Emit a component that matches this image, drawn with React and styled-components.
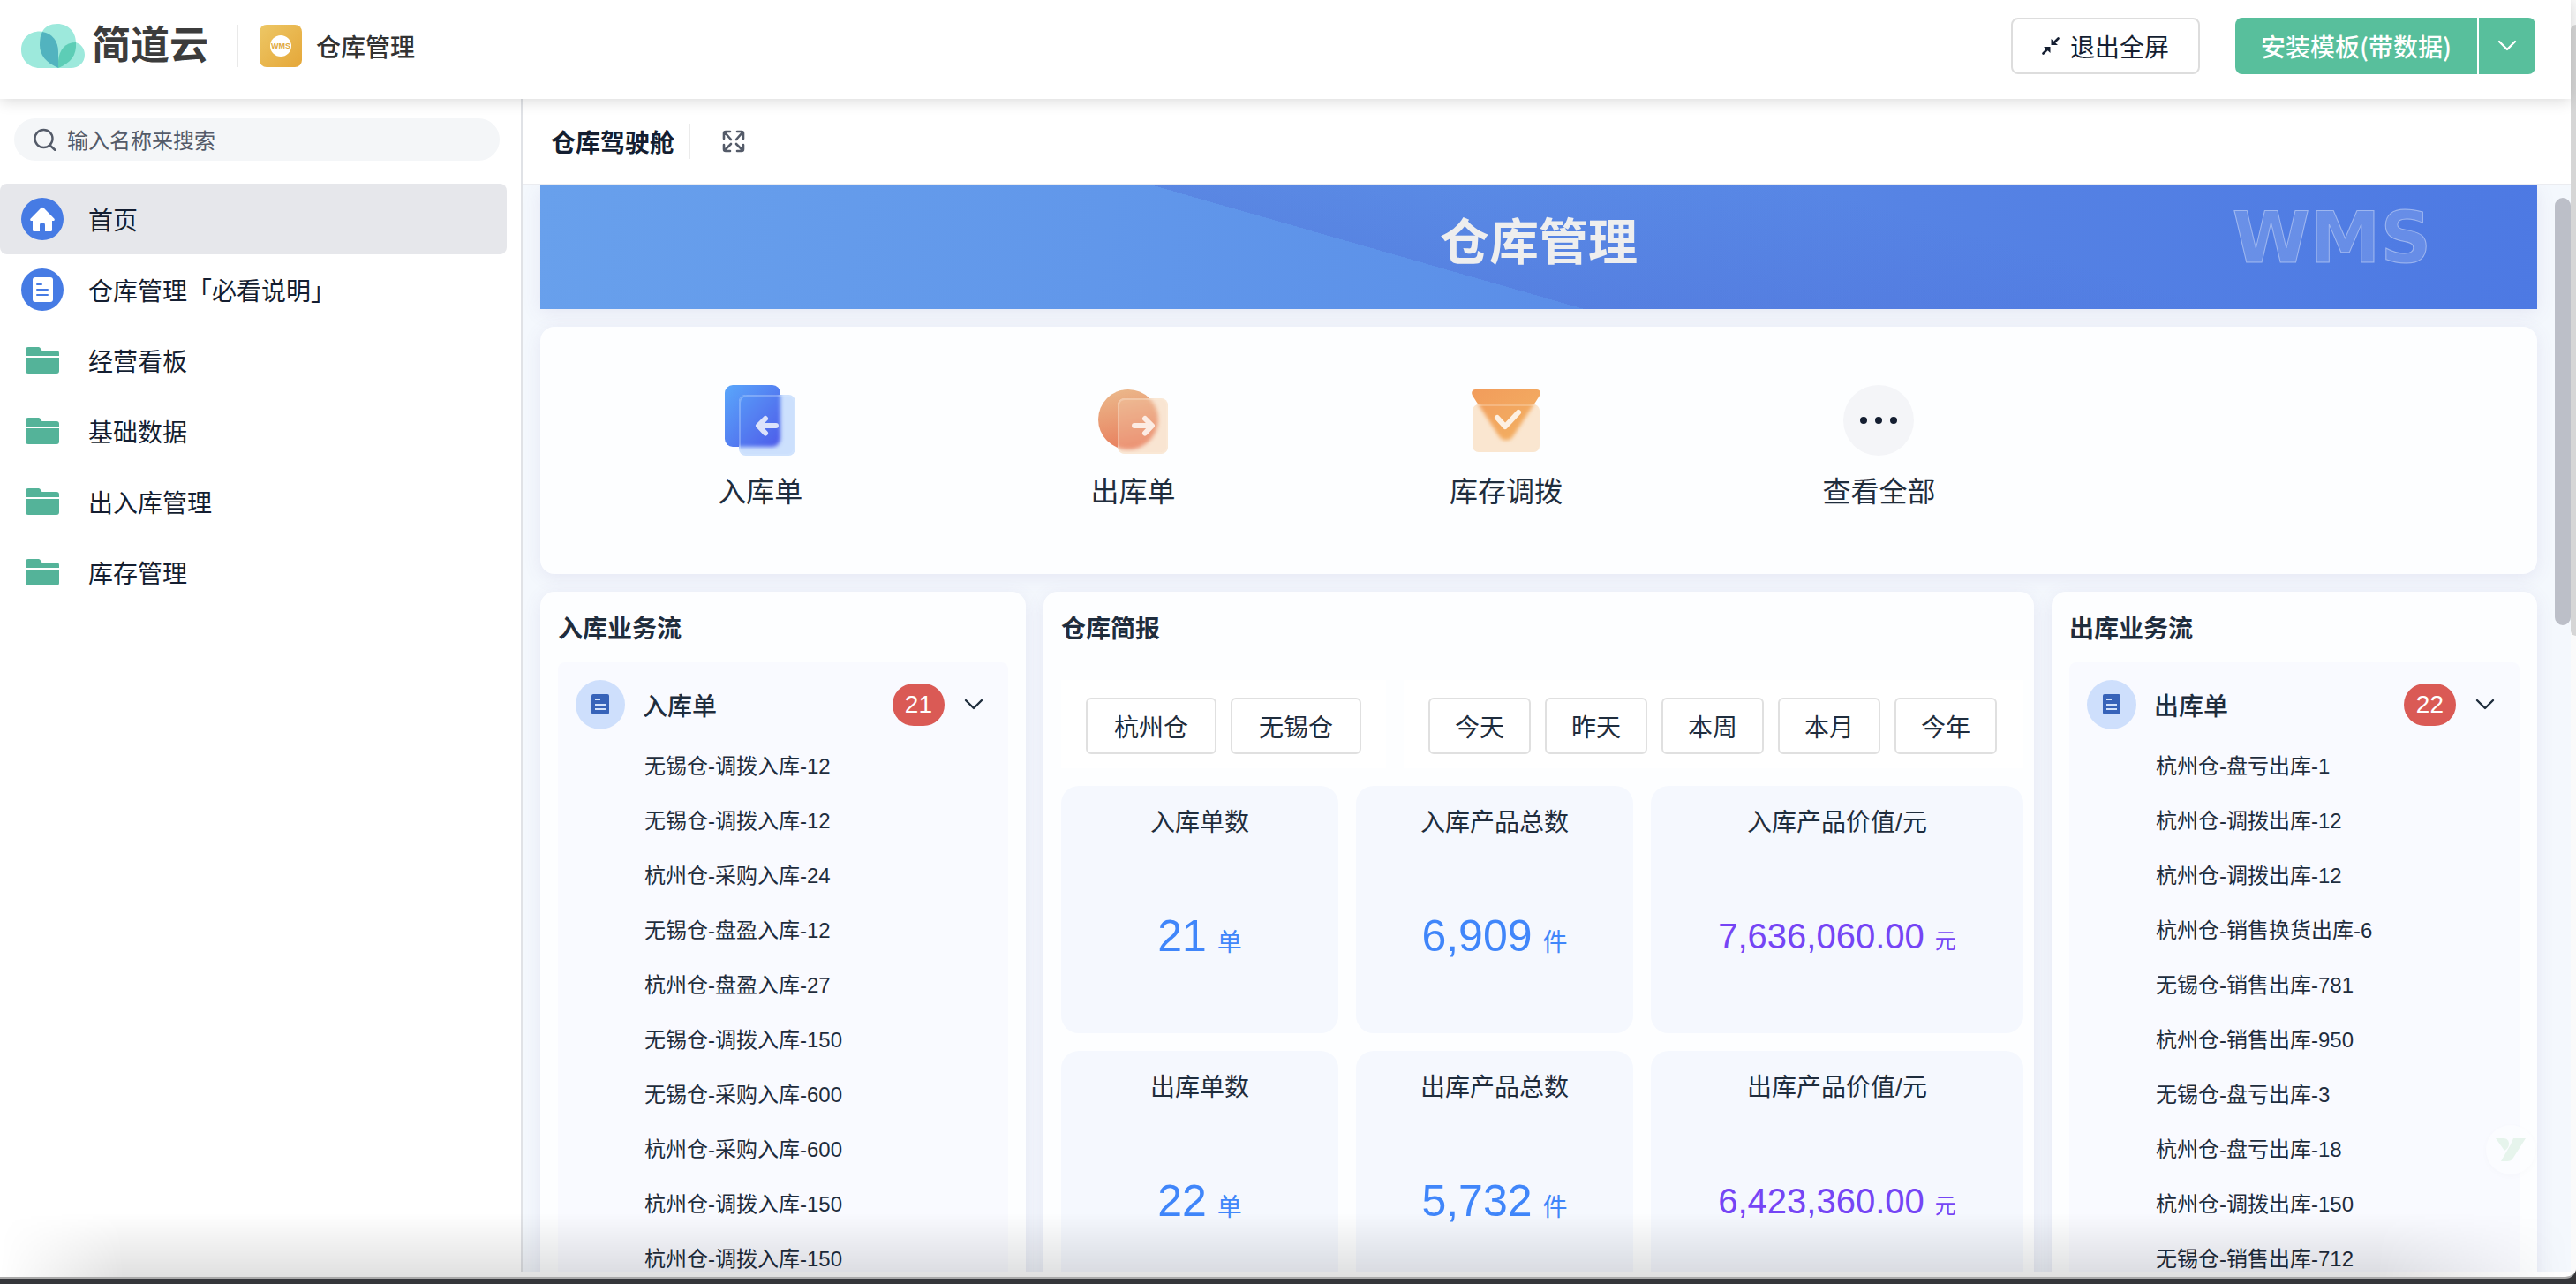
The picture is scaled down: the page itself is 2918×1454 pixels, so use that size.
import { useState } from "react";
import styled, { createGlobalStyle } from "styled-components";

const menu = [
  { name: "首页", icon: "home" },
  { name: "仓库管理「必看说明」", icon: "doc" },
  { name: "经营看板", icon: "folder" },
  { name: "基础数据", icon: "folder" },
  { name: "出入库管理", icon: "folder" },
  { name: "库存管理", icon: "folder" },
];

const inbound = [
  "无锡仓-调拨入库-12",
  "无锡仓-调拨入库-12",
  "杭州仓-采购入库-24",
  "无锡仓-盘盈入库-12",
  "杭州仓-盘盈入库-27",
  "无锡仓-调拨入库-150",
  "无锡仓-采购入库-600",
  "杭州仓-采购入库-600",
  "杭州仓-调拨入库-150",
  "杭州仓-调拨入库-150",
];

const outbound = [
  "杭州仓-盘亏出库-1",
  "杭州仓-调拨出库-12",
  "杭州仓-调拨出库-12",
  "杭州仓-销售换货出库-6",
  "无锡仓-销售出库-781",
  "杭州仓-销售出库-950",
  "无锡仓-盘亏出库-3",
  "杭州仓-盘亏出库-18",
  "杭州仓-调拨出库-150",
  "无锡仓-销售出库-712",
];

const stats = [
  { label: "入库单数", value: "21", unit: "单" },
  { label: "入库产品总数", value: "6,909", unit: "件" },
  { label: "入库产品价值/元", value: "7,636,060.00", unit: "元", money: true },
  { label: "出库单数", value: "22", unit: "单" },
  { label: "出库产品总数", value: "5,732", unit: "件" },
  { label: "出库产品价值/元", value: "6,423,360.00", unit: "元", money: true },
];

const warehouses = ["杭州仓", "无锡仓"];
const periods = ["今天", "昨天", "本周", "本月", "今年"];

const CloudLogo = () => (
  <svg width="72" height="50" viewBox="0 0 72 50" aria-hidden="true">
    <path
      d="M21 50C9 50 0 41 0 29.500C0 17 9 8.500 21 8.500L24 8.700C27 3 33 0 41 0C53 0 62 9 62 21C68 23 72 28 72 35C72 44 65 50 56 50Z"
      fill="#9de9dc"
    />
    <path
      d="M42 50C28 44 21 35 21 24C21 17 22 12 24 9C35 11 42 19 42 32Z"
      fill="#52b3bf"
    />
    <path
      d="M42 50V42C43 29 50 21 62 21C63 36 56 44 42 50Z"
      fill="#5dcdb6"
    />
  </svg>
);

const HomeIcon = () => (
  <svg width="48" height="48" viewBox="0 0 48 48" aria-hidden="true">
    <circle cx="24" cy="24" r="24" fill="#467be4" />
    <path
      d="M22.700 11.300a2 2 0 0 1 2.600 0L37.300 23.500c1 1 .4 2.500-.8 2.500H35v10.500a1.500 1.500 0 0 1-1.500 1.500H27v-7a3 3 0 0 0-6 0v7h-6.500a1.500 1.500 0 0 1-1.500-1.500V26h-1.500c-1.200 0-1.800-1.500-.8-2.500Z"
      fill="#fff"
    />
  </svg>
);

const DocIcon = () => (
  <svg width="48" height="48" viewBox="0 0 48 48" aria-hidden="true">
    <circle cx="24" cy="24" r="24" fill="#467be4" />
    <rect x="13" y="10" width="23" height="28" rx="3" fill="#fff" />
    <path
      d="M18 18h5M18 24h12M18 30h12"
      stroke="#467be4"
      strokeWidth="2"
      strokeLinecap="round"
    />
  </svg>
);

const FolderIcon = () => (
  <svg width="48" height="48" viewBox="0 0 48 48" aria-hidden="true">
    <path
      d="M5 19V12a3 3 0 0 1 3-3h11c1 0 2 .4 2.500 1l2 3H40a3 3 0 0 1 3 3v3Z"
      fill="#54b399"
    />
    <path d="M5 21h38v15a3 3 0 0 1-3 3H8a3 3 0 0 1-3-3Z" fill="#54b399" />
  </svg>
);

const menuIcons = { home: HomeIcon, doc: DocIcon, folder: FolderIcon };

const SearchIcon = () => (
  <svg width="26" height="26" viewBox="0 0 26 26" fill="none" aria-hidden="true">
    <circle cx="11.500" cy="12" r="10" stroke="#545b69" strokeWidth="2.400" />
    <path d="M18.500 19.500l6 5.500" stroke="#545b69" strokeWidth="2.600" strokeLinecap="round" />
  </svg>
);

const Chevron = ({ color }) => (
  <svg width="22" height="14" viewBox="0 0 22 14" fill="none" aria-hidden="true">
    <path
      d="M2 2l9 9 9-9"
      stroke={color}
      strokeWidth="2.400"
      strokeLinecap="round"
      strokeLinejoin="round"
    />
  </svg>
);

const ShrinkIcon = () => (
  <svg width="20" height="20" viewBox="0 0 20 20" fill="#141e31" aria-hidden="true">
    <path d="M10.500 2v7h7.500Z" />
    <path d="M9.500 18v-7H2Z" />
    <path
      d="M12.500 7.500l6-6M7.500 12.500l-6 6"
      stroke="#141e31"
      strokeWidth="2.600"
      strokeLinecap="round"
    />
  </svg>
);

const ExpandIcon = () => (
  <svg
    width="26"
    height="26"
    viewBox="0 0 26 26"
    fill="none"
    stroke="#545b69"
    strokeWidth="2.600"
    strokeLinecap="round"
    aria-hidden="true"
  >
    <path d="M2 10V4a2 2 0 0 1 2-2h5M3 3l7 8M24 10V4a2 2 0 0 0-2-2h-5M23 3l-7 8" />
    <path d="M2 17v5a2 2 0 0 0 2 2h5M3 23l7-7M24 17v5a2 2 0 0 1-2 2h-5M23 23l-7-7" />
  </svg>
);

const InboundIcon = () => (
  <svg width="80" height="80" viewBox="0 0 80 80" aria-hidden="true">
    <defs>
      <linearGradient id="inBack" x1="0" y1="0" x2="1" y2="1">
        <stop offset="0" stopColor="#5aa7fb" />
        <stop offset="1" stopColor="#4e5be9" />
      </linearGradient>
      <clipPath id="inClip">
        <rect x="16" y="11" width="64" height="69" rx="8" />
      </clipPath>
      <filter id="soft">
        <feGaussianBlur stdDeviation="2" />
      </filter>
    </defs>
    <rect width="63" height="70" rx="9" fill="url(#inBack)" />
    <rect x="16" y="11" width="64" height="69" rx="8" fill="#cce0fd" />
    <g clipPath="url(#inClip)">
      <rect width="63" height="70" rx="9" fill="url(#inBack)" filter="url(#soft)" />
    </g>
    <rect
      x="17"
      y="12"
      width="62"
      height="67"
      rx="8"
      fill="none"
      stroke="#d9eaff"
      strokeOpacity="0.300"
      strokeWidth="2"
    />
    <path
      d="M58 46H39M46 38l-8 8 8 8.500"
      fill="none"
      stroke="#dce2fb"
      strokeWidth="6"
      strokeLinecap="round"
      strokeLinejoin="round"
    />
  </svg>
);

const OutboundIcon = () => (
  <svg width="80" height="80" viewBox="0 0 80 80" aria-hidden="true">
    <defs>
      <linearGradient id="outBack" x1="0.300" y1="0" x2="0.500" y2="1">
        <stop offset="0" stopColor="#ebb78a" />
        <stop offset="1" stopColor="#e87e5d" />
      </linearGradient>
      <clipPath id="outClip">
        <rect x="22" y="15" width="57" height="63" rx="8" />
      </clipPath>
      <filter id="softOut">
        <feGaussianBlur stdDeviation="2" />
      </filter>
    </defs>
    <circle cx="34" cy="39" r="34" fill="url(#outBack)" />
    <rect x="22" y="15" width="57" height="63" rx="8" fill="#f9e5d2" />
    <g clipPath="url(#outClip)">
      <circle cx="34" cy="39" r="34" fill="url(#outBack)" filter="url(#softOut)" opacity="0.800" />
    </g>
    <rect
      x="23"
      y="16"
      width="55"
      height="61"
      rx="7"
      fill="none"
      stroke="#fdeedd"
      strokeOpacity="0.300"
      strokeWidth="2"
    />
    <path
      d="M41 46h19M53 38l8 8-8 8.500"
      fill="none"
      stroke="#fcece4"
      strokeWidth="6"
      strokeLinecap="round"
      strokeLinejoin="round"
    />
  </svg>
);

const TransferIcon = () => (
  <svg width="80" height="80" viewBox="0 0 80 80" aria-hidden="true">
    <defs>
      <linearGradient id="trBack" x1="0" y1="0" x2="1" y2="1">
        <stop offset="0" stopColor="#f29c5b" />
        <stop offset="1" stopColor="#f3b264" />
      </linearGradient>
      <clipPath id="trClip">
        <rect x="2" y="22" width="76" height="54" rx="7" />
      </clipPath>
      <filter id="softTr">
        <feGaussianBlur stdDeviation="2" />
      </filter>
    </defs>
    <path
      d="M5 5h70c3 0 5 3 3 7L48 59c-4 6-12 6-16 0L2 12c-2-4 0-7 3-7Z"
      fill="url(#trBack)"
    />
    <rect x="2" y="22" width="76" height="54" rx="7" fill="#fae6d0" />
    <g clipPath="url(#trClip)">
      <path
        d="M5 5h70c3 0 5 3 3 7L48 58c-4 6-12 6-16 0L2 12c-2-4 0-7 3-7Z"
        fill="url(#trBack)"
        filter="url(#softTr)"
      />
    </g>
    <rect
      x="3"
      y="23"
      width="74"
      height="52"
      rx="7"
      fill="none"
      stroke="#fde9d0"
      strokeOpacity="0.300"
      strokeWidth="2"
    />
    <path
      d="M30 37l9 10 15-16"
      fill="none"
      stroke="#fdf0e2"
      strokeWidth="6"
      strokeLinecap="round"
      strokeLinejoin="round"
    />
  </svg>
);

const MoreIcon = () => (
  <svg width="80" height="80" viewBox="0 0 80 80" aria-hidden="true">
    <circle cx="40" cy="40" r="40" fill="#f4f5f8" />
    <circle cx="23" cy="40" r="4" fill="#141e31" />
    <circle cx="40" cy="40" r="4" fill="#141e31" />
    <circle cx="57" cy="40" r="4" fill="#141e31" />
  </svg>
);

const FlowIcon = () => (
  <svg width="56" height="56" viewBox="0 0 56 56" aria-hidden="true">
    <circle cx="28" cy="28" r="28" fill="#cedffc" />
    <rect x="18" y="16" width="20" height="23" rx="2" fill="#3763b9" />
    <path d="M22 22h6M22 28h12M22 33h12" stroke="#d3e2fb" strokeWidth="2" />
  </svg>
);

const shortcuts = [
  { name: "入库单", Icon: InboundIcon },
  { name: "出库单", Icon: OutboundIcon },
  { name: "库存调拨", Icon: TransferIcon },
  { name: "查看全部", Icon: MoreIcon },
];

const Flow = ({ title, name, count, rows }) => {
  const [open, setOpen] = useState(true);

  return (
    <Card>
      <CardTitle>{title}</CardTitle>
      <FlowPanel>
        <FlowHead type="button" aria-expanded={open} onClick={() => setOpen(!open)}>
          <FlowIcon />
          <FlowName>{name}</FlowName>
          <Badge>{count}</Badge>
          <Chevron color="#1f2d3d" />
        </FlowHead>
        {open && (
          <FlowList>
            {rows.map((row, i) => (
              <FlowRow key={i}>{row}</FlowRow>
            ))}
          </FlowList>
        )}
      </FlowPanel>
    </Card>
  );
};

const App = () => {
  const [keyword, setKeyword] = useState("");

  return (
    <Shell>
      <GlobalStyle />
      <Window>
        <Header>
          <Brand href="#">
            <CloudLogo />
            <BrandName>简道云</BrandName>
          </Brand>
          <HeaderDivider />
          <AppBadge>
            <span>WMS</span>
          </AppBadge>
          <AppName>仓库管理</AppName>
          <ExitButton type="button">
            <ShrinkIcon />
            退出全屏
          </ExitButton>
          <InstallGroup>
            <InstallButton type="button">安装模板(带数据)</InstallButton>
            <InstallMore type="button" aria-label="更多安装方式">
              <Chevron color="#fff" />
            </InstallMore>
          </InstallGroup>
        </Header>

        <Body>
          <Sidebar>
            <SearchBox>
              <SearchIcon />
              <SearchInput
                type="text"
                aria-label="搜索"
                placeholder="输入名称来搜索"
                value={keyword}
                onChange={(e) => setKeyword(e.target.value)}
              />
            </SearchBox>
            <nav>
              {menu.map(({ name, icon }, i) => {
                const Icon = menuIcons[icon];
                return (
                  <MenuItem key={name} href="#" $active={i === 0}>
                    <Icon />
                    {name}
                  </MenuItem>
                );
              })}
            </nav>
          </Sidebar>

          <Main>
            <Toolbar>
              <PageTitle>仓库驾驶舱</PageTitle>
              <IconButton type="button" aria-label="全屏">
                <ExpandIcon />
              </IconButton>
            </Toolbar>
            <Scroller>
              <Board>
                <Banner>
                  <BannerTitle>仓库管理</BannerTitle>
                  <BannerMark>WMS</BannerMark>
                </Banner>
                <Shortcuts>
                  {shortcuts.map(({ name, Icon }) => (
                    <Shortcut key={name} href="#">
                      <Icon />
                      {name}
                    </Shortcut>
                  ))}
                </Shortcuts>
                <Columns>
                  <Flow title="入库业务流" name="入库单" count={21} rows={inbound} />
                  <Card $brief>
                    <CardTitle>仓库简报</CardTitle>
                    <Filters>
                      <FilterGroup>
                        {warehouses.map((w) => (
                          <FilterButton key={w} type="button" $wide>
                            {w}
                          </FilterButton>
                        ))}
                      </FilterGroup>
                      <FilterGroup $grow>
                        {periods.map((p) => (
                          <FilterButton key={p} type="button">
                            {p}
                          </FilterButton>
                        ))}
                      </FilterGroup>
                    </Filters>
                    <Stats>
                      {stats.map(({ label, value, unit, money }) => (
                        <Stat key={label}>
                          <StatLabel>{label}</StatLabel>
                          <StatValue $money={money}>
                            {value}
                            <StatUnit $money={money}>{unit}</StatUnit>
                          </StatValue>
                        </Stat>
                      ))}
                    </Stats>
                  </Card>
                  <Flow title="出库业务流" name="出库单" count={22} rows={outbound} />
                </Columns>
              </Board>
              <ScrollTrack>
                <ScrollThumb />
              </ScrollTrack>
            </Scroller>
          </Main>
        </Body>
        <BottomShade />
        <Helper type="button" aria-label="助手">
          <svg width="34" height="26" viewBox="0 0 34 26" aria-hidden="true">
            <path d="M0 0h9c4 0 6 3 6 6 0 4-2 6-5 8Z" fill="#e6f4ec" />
            <path d="M20 0h14L20 22c-2 3-4 4-7 4H6L17 7Z" fill="#e6f4ec" />
          </svg>
        </Helper>
      </Window>
      <PageTrack>
        <PageThumb />
      </PageTrack>
    </Shell>
  );
};

const latin = `"Liberation Sans", "Noto Sans CJK SC", sans-serif`;
const shadow = "0 4px 20px rgba(94, 80, 160, 0.1)";

const GlobalStyle = createGlobalStyle`
  * {
    box-sizing: border-box;
  }

  body {
    margin: 0;
    background: #35363a;
    color: #141e31;
    font-family: "Noto Sans CJK SC", sans-serif;
    font-size: 28px;
    line-height: 40px;
  }

  button, input {
    font: inherit;
    color: inherit;
  }

  button {
    padding: 0;
    border: 0;
    background: none;
    cursor: pointer;
  }

  a {
    color: inherit;
    text-decoration: none;
  }

  svg {
    display: block;
    flex: none;
  }
`;

const Shell = styled.div`
  display: flex;
  height: calc(100vh - 6px);
  background: #fff;
  border-bottom: 2px solid #a9a9a9;
  border-radius: 0 0 12px 0;
  overflow: hidden;
`;

const Window = styled.div`
  position: relative;
  flex: 1;
  min-width: 0;
  display: flex;
  flex-direction: column;
  padding-bottom: 6px;
`;

const Header = styled.header`
  position: relative;
  z-index: 1;
  flex: none;
  display: flex;
  align-items: center;
  height: 112px;
  padding: 0 40px 8px 24px;
  background: #fff;
  box-shadow: 0 2px 16px rgba(0, 0, 0, 0.16);
`;

const Brand = styled.a`
  display: flex;
  align-items: center;
  gap: 8px;
`;

const BrandName = styled.span`
  color: #3c3c3c;
  font-family: ${latin};
  font-size: 44px;
  font-weight: 700;
  line-height: 48px;
`;

const HeaderDivider = styled.span`
  width: 2px;
  height: 48px;
  margin: 0 24px 0 32px;
  background: #e9e9e9;
`;

const AppBadge = styled.span`
  display: grid;
  place-items: center;
  width: 48px;
  height: 48px;
  border-radius: 8px;
  background: linear-gradient(135deg, #edc765, #e5a739);

  span {
    display: grid;
    place-items: center;
    width: 24px;
    height: 24px;
    border-radius: 12px;
    background: #fff;
    color: #e0a93c;
    font-family: ${latin};
    font-size: 9px;
    font-weight: 700;
    line-height: 12px;
  }
`;

const AppName = styled.span`
  flex: 1;
  margin-left: 16px;
  color: #333;
  font-weight: 500;
`;

const ExitButton = styled.button`
  display: flex;
  align-items: center;
  justify-content: center;
  gap: 12px;
  width: 214px;
  height: 64px;
  border: 2px solid #ddd;
  border-radius: 8px;
  background: #fff;
`;

const InstallGroup = styled.div`
  display: flex;
  gap: 2px;
  margin-left: 40px;
  color: #fff;
  font-weight: 500;
`;

const InstallButton = styled.button`
  width: 274px;
  height: 64px;
  border-radius: 8px 0 0 8px;
  background: #58bf9c;
`;

const InstallMore = styled.button`
  display: grid;
  place-items: center;
  width: 64px;
  height: 64px;
  border-radius: 0 8px 8px 0;
  background: #58bf9c;
`;

const Body = styled.div`
  flex: 1;
  min-height: 0;
  display: flex;
`;

const Sidebar = styled.aside`
  flex: none;
  width: 592px;
  padding: 22px 16px 0 0;
  border-right: 2px solid #e0e2e6;
  background: #fff;
`;

const SearchBox = styled.label`
  display: flex;
  align-items: center;
  gap: 12px;
  height: 48px;
  margin: 0 8px 26px 16px;
  padding: 0 22px;
  border-radius: 24px;
  background: #f4f6f8;
`;

const SearchInput = styled.input`
  flex: 1;
  min-width: 0;
  padding: 0;
  border: 0;
  outline: 0;
  background: none;
  font-size: 24px;
  line-height: 32px;

  &::placeholder {
    color: #545b69;
    opacity: 1;
  }
`;

const MenuItem = styled.a`
  display: flex;
  align-items: center;
  gap: 28px;
  height: 80px;
  padding-left: 24px;
  border-radius: 8px;
  background: ${({ $active }) => ($active ? "#e6e7eb" : "none")};
`;

const Main = styled.main`
  flex: 1;
  min-width: 0;
  display: flex;
  flex-direction: column;
`;

const Toolbar = styled.div`
  flex: none;
  display: flex;
  align-items: center;
  height: 98px;
  padding-left: 32px;
  border-bottom: 2px solid #ebecf0;
  background: #fff;
`;

const PageTitle = styled.h1`
  margin: 0;
  padding-right: 16px;
  border-right: 2px solid #ebebeb;
  font-size: 28px;
  font-weight: 700;
  line-height: 40px;
`;

const IconButton = styled.button`
  margin-left: 36px;
`;

const Scroller = styled.div`
  flex: 1;
  min-height: 0;
  display: flex;
  background: #f4f8fd;
`;

const Board = styled.div`
  flex: 1;
  min-width: 0;
  display: flex;
  flex-direction: column;
  gap: 20px;
  padding: 0 20px;
  overflow: hidden;
`;

const ScrollTrack = styled.div`
  width: 18px;
  padding-top: 14px;
`;

const ScrollThumb = styled.div`
  height: 484px;
  border-radius: 9px;
  background: #bcbfc8;
`;

const Banner = styled.div`
  flex: none;
  display: grid;
  grid-template-columns: 1fr auto 1fr;
  align-items: center;
  height: 140px;
  padding-bottom: 20px;
  background: linear-gradient(
      196deg,
      transparent 30%,
      rgba(70, 90, 205, 0.26) 57%,
      transparent 57%
    ),
    linear-gradient(100deg, #68a0ec 0%, #5d92e9 44%, #5683e4 68%, #4d79e3 100%);
  box-shadow: ${shadow};
`;

const BannerTitle = styled.h2`
  grid-column: 2;
  margin: 0;
  color: #eee;
  font-size: 56px;
  font-weight: 700;
  line-height: 64px;
`;

const BannerMark = styled.span`
  justify-self: end;
  margin-right: 120px;
  color: rgba(255, 255, 255, 0.14);
  font-family: "DejaVu Sans", sans-serif;
  font-size: 80px;
  font-weight: 700;
  line-height: 80px;
  -webkit-text-stroke: 1px rgba(255, 255, 255, 0.4);
`;

const Shortcuts = styled.div`
  flex: none;
  display: grid;
  grid-template-columns: repeat(5, 1fr);
  height: 280px;
  padding: 66px 112px 0 38px;
  border-radius: 16px;
  background: #fdfeff;
  box-shadow: ${shadow};
`;

const Shortcut = styled.a`
  display: flex;
  flex-direction: column;
  align-items: center;
  gap: 16px;
  color: #1f2d3d;
  font-size: 32px;
  line-height: 44px;
`;

const Columns = styled.div`
  flex: 1;
  min-height: 0;
  display: grid;
  grid-template-columns: 550fr 1122fr 550fr;
  gap: 20px;
`;

const Card = styled.section`
  min-width: 0;
  padding: ${({ $brief }) => ($brief ? "20px 12px 0 20px" : "20px 20px 0")};
  border-radius: 16px 16px 0 0;
  background: #fdfeff;
  box-shadow: ${shadow};
  color: #1f2d3d;
`;

const CardTitle = styled.h2`
  margin: 0 0 20px;
  font-size: 28px;
  font-weight: 700;
  line-height: 40px;
`;

const FlowPanel = styled.div`
  min-height: 100%;
  border-radius: 8px 8px 0 0;
  background: #f9faff;
`;

const FlowHead = styled.button`
  display: flex;
  align-items: center;
  width: 100%;
  height: 96px;
  padding: 0 28px 0 20px;
`;

const FlowName = styled.span`
  flex: 1;
  margin-left: 20px;
  font-weight: 500;
  text-align: left;
`;

const Badge = styled.span`
  height: 48px;
  margin-right: 22px;
  padding: 0 14px;
  border-radius: 24px;
  background: #da5a55;
  color: #fff;
  font-family: ${latin};
  line-height: 48px;
`;

const FlowList = styled.ul`
  margin: 0;
  padding: 0;
  list-style: none;
`;

const FlowRow = styled.li`
  height: 62px;
  padding-left: 98px;
  font-family: ${latin};
  font-size: 24px;
  line-height: 44px;
`;

const Filters = styled.div`
  display: flex;
  gap: 20px;
  margin: 40px 0 20px;
`;

const FilterGroup = styled.div`
  flex: ${({ $grow }) => ($grow ? "1" : "none")};
  display: flex;
  align-items: flex-start;
  gap: 16px;
  height: 100px;
  padding: 20px 28px 0;
  background: #fff;
`;

const FilterButton = styled.button`
  width: ${({ $wide }) => ($wide ? "148px" : "116px")};
  height: 64px;
  border: 2px solid #e0e0e0;
  border-radius: 6px;
  background: #fff;
`;

const Stats = styled.div`
  display: grid;
  grid-template-columns: 314fr 314fr 422fr;
  grid-auto-rows: 280px;
  gap: 20px;
`;

const Stat = styled.div`
  padding-top: 20px;
  border-radius: 20px;
  background: #f5f8fe;
  font-family: ${latin};
  text-align: center;
`;

const StatLabel = styled.div`
  line-height: 44px;
`;

const StatValue = styled.div`
  margin-top: 70px;
  color: ${({ $money }) => ($money ? "#7545f5" : "#4086fa")};
  font-size: ${({ $money }) => ($money ? "40px" : "50px")};
  line-height: 72px;
`;

const StatUnit = styled.span`
  margin-left: 12px;
  font-size: ${({ $money }) => ($money ? "24px" : "28px")};
`;

const PageTrack = styled.div`
  flex: none;
  width: 6px;
  padding-top: 28px;
  background: #fafafa;
`;

const PageThumb = styled.div`
  height: 692px;
  border-radius: 6px 0 0 6px;
  background: #d6d6d6;
`;

const Helper = styled.button`
  position: absolute;
  right: 40px;
  bottom: 116px;
  display: grid;
  place-items: center;
  width: 56px;
  height: 56px;
  border-radius: 28px;
  background: rgba(253, 254, 255, 0.5);
  box-shadow: 0 2px 8px rgba(0, 0, 0, 0.02);
`;

const BottomShade = styled.div`
  position: absolute;
  left: 0;
  right: 0;
  bottom: 0;
  height: 72px;
  background: linear-gradient(transparent, rgba(0, 0, 0, 0.12));
  mask-image: linear-gradient(90deg, transparent, #000 140px, #000 calc(100% - 220px), transparent);
  pointer-events: none;
`;

export default App;
